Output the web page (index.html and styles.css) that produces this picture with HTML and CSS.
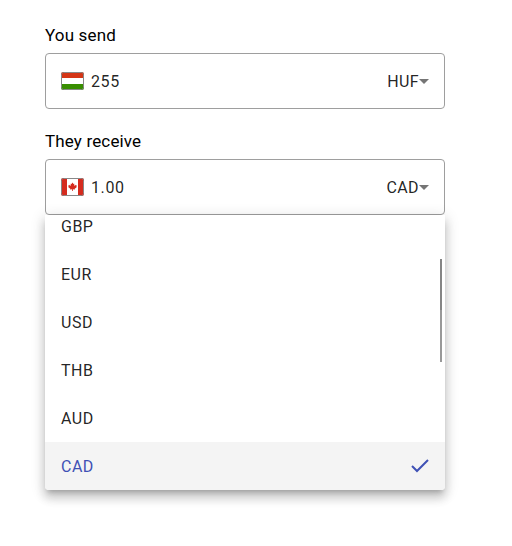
FILE: index.html
```
<!DOCTYPE html>
<html lang="en">
<head>
<meta charset="utf-8">
<title>Send money</title>
<link rel="stylesheet" href="styles.css">
</head>
<body>
<main class="converter">
  <label class="label">You send</label>
  <div class="field">
    <svg class="flag" viewBox="0 0 23 18">
      <rect width="23" height="6" fill="#d43516"/>
      <rect y="6" width="23" height="6" fill="#fff"/>
      <rect y="12" width="23" height="6" fill="#388e00"/>
      <rect x=".5" y=".5" width="22" height="17" rx="1.8" fill="none" stroke="#888"/>
    </svg>
    <span class="amount">255</span>
    <span class="currency">HUF</span>
    <i class="arrow"></i>
  </div>
  <label class="label label-receive">They receive</label>
  <div class="field">
    <svg class="flag" viewBox="0 0 23 18">
      <rect width="23" height="18" fill="#fff"/>
      <rect width="6" height="18" fill="#d52b1e"/>
      <rect x="17" width="6" height="18" fill="#d52b1e"/>
      <path d="M11.5 4.5l-1 1.6-.9-.3.4 2.1-1.4-1.2-.3.7-1.1-.1.4 1.3-.5.3 2.2 1.8-.3.8 2.1-.3v1.8h.8v-1.8l2.1.3-.3-.8 2.2-1.8-.5-.3.4-1.3-1.1.1-.3-.7-1.4 1.2.4-2.1-.9.3z" fill="#d52b1e"/>
      <rect x=".5" y=".5" width="22" height="17" rx="1.8" fill="none" stroke="#888"/>
    </svg>
    <span class="amount">1.00</span>
    <span class="currency">CAD</span>
    <i class="arrow"></i>
  </div>
  <div class="panel">
    <div class="options">
      <div class="option"><span>GBP</span></div>
      <div class="option"><span>EUR</span></div>
      <div class="option"><span>USD</span></div>
      <div class="option"><span>THB</span></div>
      <div class="option"><span>AUD</span></div>
      <div class="option selected"><span>CAD</span>
        <svg class="check" viewBox="0 0 18 14"><path d="M1 7l5 5L17 1" fill="none" stroke="#3f51b5" stroke-width="2"/></svg>
      </div>
    </div>
    <i class="thumb"></i>
  </div>
</main>
</body>
</html>
```

FILE: styles.css
```
* { box-sizing: border-box; }
body {
  min-height: 546px;
  margin: 0;
  background: #fff;
  color: #000;
  font: 16px/20px Roboto, sans-serif;
}
.converter {
  width: 400px;
  margin-left: 45px;
  padding-top: 25px;
}
.label {
  display: block;
  height: 20px;
  margin-bottom: 8px;
  font-size: 17px;
  letter-spacing: .15px;
}
.label-receive { margin-top: 22px; }
.field {
  display: flex;
  align-items: center;
  height: 56px;
  padding: 0 15px;
  border: 1px solid #9e9e9e;
  border-radius: 4px;
  color: rgba(0, 0, 0, .87);
}
.flag {
  width: 23px;
  height: 18px;
  margin-right: 7px;
  border-radius: 2px;
}
.amount,
.currency,
.option span { padding-top: 2px; }
.amount { flex: 1; letter-spacing: .6px; }
.currency { letter-spacing: .4px; }
.arrow {
  border: 5px solid transparent;
  border-top-color: #757575;
  border-bottom: 0;
}
.panel {
  position: relative;
  height: 275px;
  border-radius: 0 0 4px 4px;
  background: #fff;
  box-shadow: 0 5px 5px -3px rgba(0, 0, 0, .2), 0 8px 10px 1px rgba(0, 0, 0, .14), 0 3px 14px 2px rgba(0, 0, 0, .12);
}
.options {
  display: flex;
  flex-direction: column;
  justify-content: flex-end;
  height: 100%;
  overflow: hidden;
  border-radius: 0 0 4px 4px;
}
.option {
  display: flex;
  flex: none;
  align-items: center;
  justify-content: space-between;
  height: 48px;
  padding: 0 16px;
  color: rgba(0, 0, 0, .87);
  letter-spacing: .5px;
}
.selected {
  background: #f4f4f4;
  color: #3f51b5;
}
.check { width: 18px; height: 14px; }
.thumb {
  position: absolute;
  top: 44px;
  right: 3px;
  width: 2px;
  height: 103px;
  background: linear-gradient(#858585 50%, #999 50%);
}
```
